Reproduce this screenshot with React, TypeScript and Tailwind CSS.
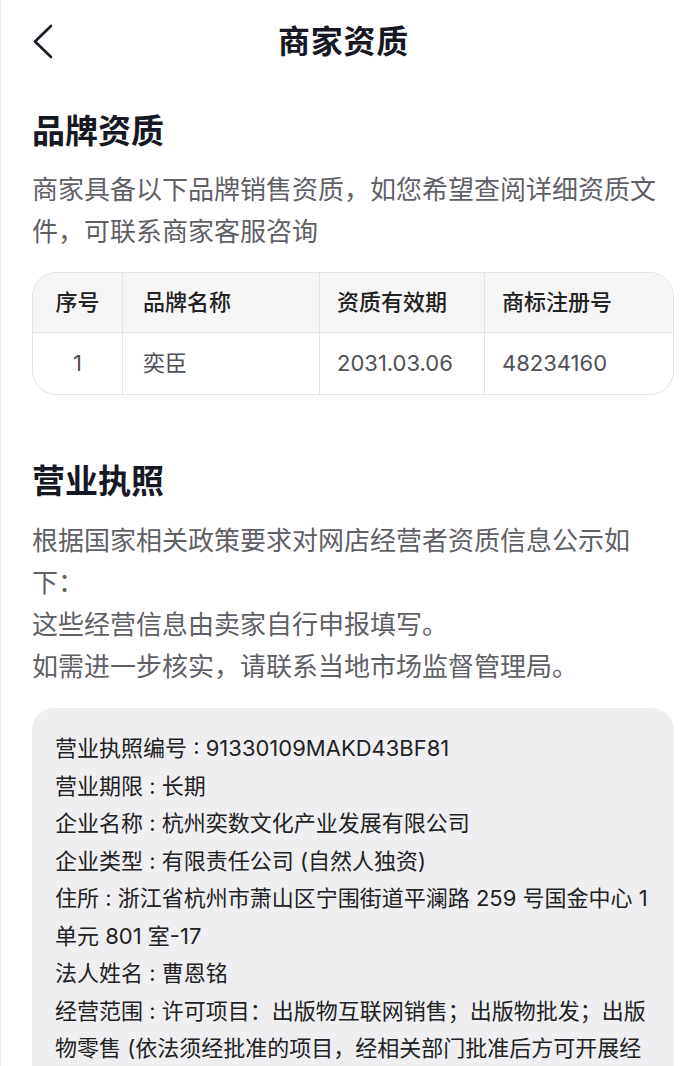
const FONT = "font-['Inter','Noto_Sans_CJK_SC',sans-serif]";

const BRANDS = [{ n: '1', name: '奕臣', date: '2031.03.06', reg: '48234160' }];

const LICENSE = [
  '营业执照编号 : 91330109MAKD43BF81',
  '营业期限 : 长期',
  '企业名称 : 杭州奕数文化产业发展有限公司',
  '企业类型 : 有限责任公司 (自然人独资)',
  '住所 : 浙江省杭州市萧山区宁围街道平澜路 259 号国金中心 1 单元 801 室-17',
  '法人姓名 : 曹恩铭',
  '经营范围 : 许可项目：出版物互联网销售；出版物批发；出版物零售 (依法须经批准的项目，经相关部门批准后方可开展经营活动)',
];

export default function App() {
  return (
    <div className={`${FONT} h-[1066px] overflow-hidden border-l border-[#ececec] bg-white text-[#161823]`}>
      {/* NAV */}
      <header className="relative flex h-[84px] items-center justify-center">
        <svg className="absolute left-[27px] top-[22px]" width="30" height="40" viewBox="0 0 30 40" fill="none">
          <path d="M23 4 L7 19.5 L23 35" stroke="#161823" strokeWidth="2.6" strokeLinecap="round" strokeLinejoin="round" />
        </svg>
        <h1 className="text-[32px] font-bold leading-none tracking-wide">商家资质</h1>
      </header>

      <main className="pl-[31px] pr-3">
        {/* BRAND */}
        <section className="pt-[25px]">
          <h2 className="text-[33px] font-bold leading-[44px]">品牌资质</h2>
          <p className="mt-4 text-[26px] leading-[42px] text-[#5f5f66]">
            商家具备以下品牌销售资质，如您希望查阅详细资质文件，可联系商家客服咨询
          </p>
          <div className="mt-[19px] overflow-hidden rounded-[24px] border border-[#e3e3e6]">
            <div className="grid grid-cols-[90px_197px_165px_1fr] bg-[#f6f6f7] text-[22px] font-medium text-[#222]">
              <div className="flex h-[59px] items-center justify-center border-r border-[#e3e3e6]">序号</div>
              <div className="flex items-center border-r border-[#e3e3e6] pl-5">品牌名称</div>
              <div className="flex items-center border-r border-[#e3e3e6] pl-[17px]">资质有效期</div>
              <div className="flex items-center pl-[17px]">商标注册号</div>
            </div>
            {BRANDS.map((b) => (
              <div key={b.n} className="grid grid-cols-[90px_197px_165px_1fr] border-t border-[#e3e3e6] text-[22px] text-[#505057]">
                <div className="flex h-[61px] items-center justify-center border-r border-[#e3e3e6]">{b.n}</div>
                <div className="flex items-center border-r border-[#e3e3e6] pl-5">{b.name}</div>
                <div className="flex items-center border-r border-[#e3e3e6] pl-[17px]">{b.date}</div>
                <div className="flex items-center pl-[17px]">{b.reg}</div>
              </div>
            ))}
          </div>
        </section>

        {/* LICENSE */}
        <section className="pt-16">
          <h2 className="text-[33px] font-bold leading-[44px]">营业执照</h2>
          <p className="mt-[17px] text-[26px] leading-[42px] text-[#5f5f66]">
            根据国家相关政策要求对网店经营者资质信息公示如下：
            <br />
            这些经营信息由卖家自行申报填写。
            <br />
            如需进一步核实，请联系当地市场监督管理局。
          </p>
          <div className="mt-5 rounded-[22px] bg-[#efeff2] px-[23px] pb-6 pt-[22px] text-[22px] leading-[37.5px] text-[#222]">
            {LICENSE.map((l) => (
              <p key={l}>{l}</p>
            ))}
          </div>
        </section>
      </main>
    </div>
  );
}
